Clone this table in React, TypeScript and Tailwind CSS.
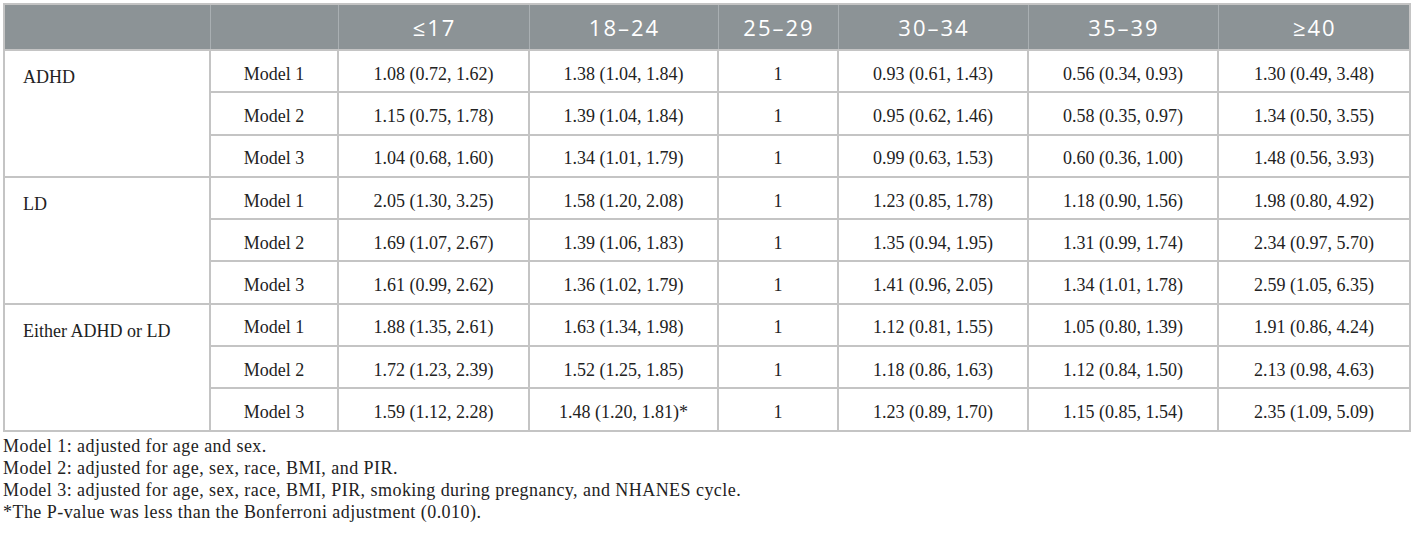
const headers = ['\u226417', '18\u201324', '25\u201329', '30\u201334', '35\u201339', '\u226540']

const groups = [
    {
        name: 'ADHD',
        rows: [
            ['1.08 (0.72, 1.62)', '1.38 (1.04, 1.84)', '1', '0.93 (0.61, 1.43)', '0.56 (0.34, 0.93)', '1.30 (0.49, 3.48)'],
            ['1.15 (0.75, 1.78)', '1.39 (1.04, 1.84)', '1', '0.95 (0.62, 1.46)', '0.58 (0.35, 0.97)', '1.34 (0.50, 3.55)'],
            ['1.04 (0.68, 1.60)', '1.34 (1.01, 1.79)', '1', '0.99 (0.63, 1.53)', '0.60 (0.36, 1.00)', '1.48 (0.56, 3.93)'],
        ],
    },
    {
        name: 'LD',
        rows: [
            ['2.05 (1.30, 3.25)', '1.58 (1.20, 2.08)', '1', '1.23 (0.85, 1.78)', '1.18 (0.90, 1.56)', '1.98 (0.80, 4.92)'],
            ['1.69 (1.07, 2.67)', '1.39 (1.06, 1.83)', '1', '1.35 (0.94, 1.95)', '1.31 (0.99, 1.74)', '2.34 (0.97, 5.70)'],
            ['1.61 (0.99, 2.62)', '1.36 (1.02, 1.79)', '1', '1.41 (0.96, 2.05)', '1.34 (1.01, 1.78)', '2.59 (1.05, 6.35)'],
        ],
    },
    {
        name: 'Either ADHD or LD',
        rows: [
            ['1.88 (1.35, 2.61)', '1.63 (1.34, 1.98)', '1', '1.12 (0.81, 1.55)', '1.05 (0.80, 1.39)', '1.91 (0.86, 4.24)'],
            ['1.72 (1.23, 2.39)', '1.52 (1.25, 1.85)', '1', '1.18 (0.86, 1.63)', '1.12 (0.84, 1.50)', '2.13 (0.98, 4.63)'],
            ['1.59 (1.12, 2.28)', '1.48 (1.20, 1.81)*', '1', '1.23 (0.89, 1.70)', '1.15 (0.85, 1.54)', '2.35 (1.09, 5.09)'],
        ],
    },
]

const notes = [
    'Model 1: adjusted for age and sex.',
    'Model 2: adjusted for age, sex, race, BMI, and PIR.',
    'Model 3: adjusted for age, sex, race, BMI, PIR, smoking during pregnancy, and NHANES cycle.',
    '*The P-value was less than the Bonferroni adjustment (0.010).',
]

const widths = ['w-[206px]', 'w-[128px]', 'w-[191px]', 'w-[189px]', 'w-[120px]', 'w-[190px]', 'w-[190px]', 'w-[192px]']

const App = () => {
    return (
        <div className="bg-white w-[1412px] h-[535px] pt-[3px] px-[3px] font-['Liberation_Serif',serif] text-[#222]">
            <table className="table-fixed border-collapse w-[1406px] border-2 border-[#c4c4c4]">
                <colgroup>
                    {widths.map((w, i) => (
                        <col key={i} className={w} />
                    ))}
                </colgroup>
                <thead>
                    <tr className="h-[46px] bg-[#8c9396] text-white font-['Open_Sans',sans-serif] text-[22px]">
                        <th className="border-r border-[#a9afb2]"></th>
                        <th className="border-r border-[#a9afb2]"></th>
                        {headers.map((h, i) => (
                            <th key={h} className={'font-normal text-center tracking-[2px] pl-[2px] ' + (i < 5 ? 'border-r border-[#a9afb2]' : '')}>
                                {h}
                            </th>
                        ))}
                    </tr>
                </thead>
                <tbody className="text-[18px]">
                    {groups.map((g) =>
                        g.rows.map((r, ri) => (
                            <tr key={g.name + ri} className="h-[42.3px]">
                                {ri === 0 && (
                                    <td rowSpan={3} className="align-top pl-[18px] pt-[13px] border-2 border-[#c4c4c4]">
                                        {g.name}
                                    </td>
                                )}
                                <td className="text-center pt-[6px] border-2 border-[#c4c4c4]">Model {ri + 1}</td>
                                {r.map((c, ci) => (
                                    <td key={ci} className="text-center pt-[6px] border-2 border-[#c4c4c4]">
                                        {c}
                                    </td>
                                ))}
                            </tr>
                        ))
                    )}
                </tbody>
            </table>
            <div className="mt-[3px] text-[18px] leading-[22px] tracking-[0.45px]">
                {notes.map((n) => (
                    <p key={n}>{n}</p>
                ))}
            </div>
        </div>
    )
}

export default App
